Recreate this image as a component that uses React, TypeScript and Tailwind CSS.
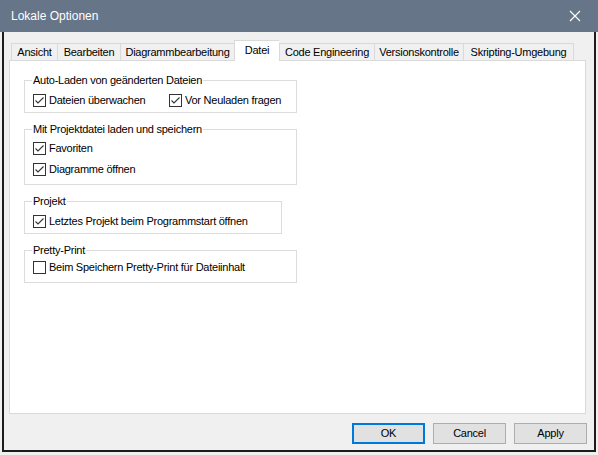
import type { ReactNode } from 'react';

const tabs = [
    { label: 'Ansicht', w: 'w-[46px]' },
    { label: 'Bearbeiten', w: 'w-[63px]' },
    { label: 'Diagrammbearbeitung', w: 'w-[114px]' },
    { label: 'Datei', w: 'w-[45px]', active: true },
    { label: 'Code Engineering', w: 'w-[95px]' },
    { label: 'Versionskontrolle', w: 'w-[89px]' },
    { label: 'Skripting-Umgebung', w: 'w-[111px]', last: true },
];

function CheckBox({ checked, label, className = '' }: { checked?: boolean; label: string; className?: string }) {
    return (
        <div className={`flex items-center h-[17px] ${className}`}>
            <span className="w-[13px] h-[13px] border border-[#333333] bg-white flex items-center justify-center shrink-0">
                {checked && (
                    <svg width="11" height="11" viewBox="0 0 11 11">
                        <path d="M1.5 5.5 L4 8 L9.5 2.5" fill="none" stroke="#333333" strokeWidth="1.1" />
                    </svg>
                )}
            </span>
            <span className="ml-[3px] whitespace-nowrap">{label}</span>
        </div>
    );
}

function Group({ title, width, children, className = '' }: { title: string; width: string; children: ReactNode; className?: string }) {
    return (
        <fieldset className={`border border-[#dcdcdc] pl-[8px] ${width} ${className}`}>
            <legend className="leading-[14px] px-[1px] -ml-[1px]">{title}</legend>
            {children}
        </fieldset>
    );
}

export default function App() {
    return (
        <div className="w-[598px] h-[455px] flex flex-col bg-[#f0f0f0] text-[11px] tracking-[-0.25px] text-black font-['Liberation_Sans',Arial,sans-serif] overflow-hidden">
            {/* Title bar */}
            <div className="h-[32px] shrink-0 bg-[#677589] flex items-center justify-between pl-[11px] pr-[17px]">
                <span className="text-white text-[12px] tracking-normal">Lokale Optionen</span>
                <svg width="12" height="12" viewBox="0 0 12 12">
                    <path d="M1 1 L11 11 M11 1 L1 11" stroke="#ffffff" strokeWidth="1.2" />
                </svg>
            </div>

            {/* Window body */}
            <div className="mx-[2px] h-[420px] border-x-2 border-b-2 border-[#1c1c1c] flex flex-col pt-[8px]">
                {/* Tabs */}
                <div className="flex items-end h-[20px] ml-[7px]">
                    {tabs.map((t) =>
                        t.active ? (
                            <div
                                key={t.label}
                                className={`${t.w} h-[21px] -mb-[1px] relative z-10 bg-white border-t border-l border-[#d9d9d9] flex items-center justify-center pb-[1px]`}
                            >
                                {t.label}
                            </div>
                        ) : (
                            <div
                                key={t.label}
                                className={`${t.w} h-[17px] border-t border-l ${t.last ? 'border-r' : ''} border-[#d9d9d9] flex items-center justify-center pt-[1px]`}
                            >
                                {t.label}
                            </div>
                        )
                    )}
                </div>

                {/* Panel */}
                <div className="ml-[5px] w-[577px] h-[354px] bg-white border border-[#d9d9d9] pt-[12px] pl-[14px]">
                    <Group title="Auto-Laden von geänderten Dateien" width="w-[273px]" className="pb-[3px]">
                        <div className="flex mt-[5px]">
                            <CheckBox checked label="Dateien überwachen" className="w-[136px]" />
                            <CheckBox checked label="Vor Neuladen fragen" />
                        </div>
                    </Group>

                    <Group title="Mit Projektdatei laden und speichern" width="w-[273px]" className="mt-[9px] pb-[6px]">
                        <div className="flex flex-col gap-[4px] mt-[4px]">
                            <CheckBox checked label="Favoriten" />
                            <CheckBox checked label="Diagramme öffnen" />
                        </div>
                    </Group>

                    <Group title="Projekt" width="w-[258px]" className="mt-[9px] pb-[3px]">
                        <CheckBox checked label="Letztes Projekt beim Programmstart öffnen" className="mt-[5px]" />
                    </Group>

                    <Group title="Pretty-Print" width="w-[273px]" className="mt-[9px] pb-[6px]">
                        <CheckBox label="Beim Speichern Pretty-Print für Dateiinhalt" className="mt-[2px]" />
                    </Group>
                </div>

                {/* Buttons */}
                <div className="flex justify-end gap-[8px] mt-[9px] mr-[7px]">
                    <button className="w-[73px] h-[21px] bg-[#e1e1e1] border-2 border-[#0078d7]">OK</button>
                    <button className="w-[73px] h-[21px] bg-[#e1e1e1] border border-[#adadad]">Cancel</button>
                    <button className="w-[73px] h-[21px] bg-[#e1e1e1] border border-[#adadad]">Apply</button>
                </div>
            </div>
        </div>
    );
}
